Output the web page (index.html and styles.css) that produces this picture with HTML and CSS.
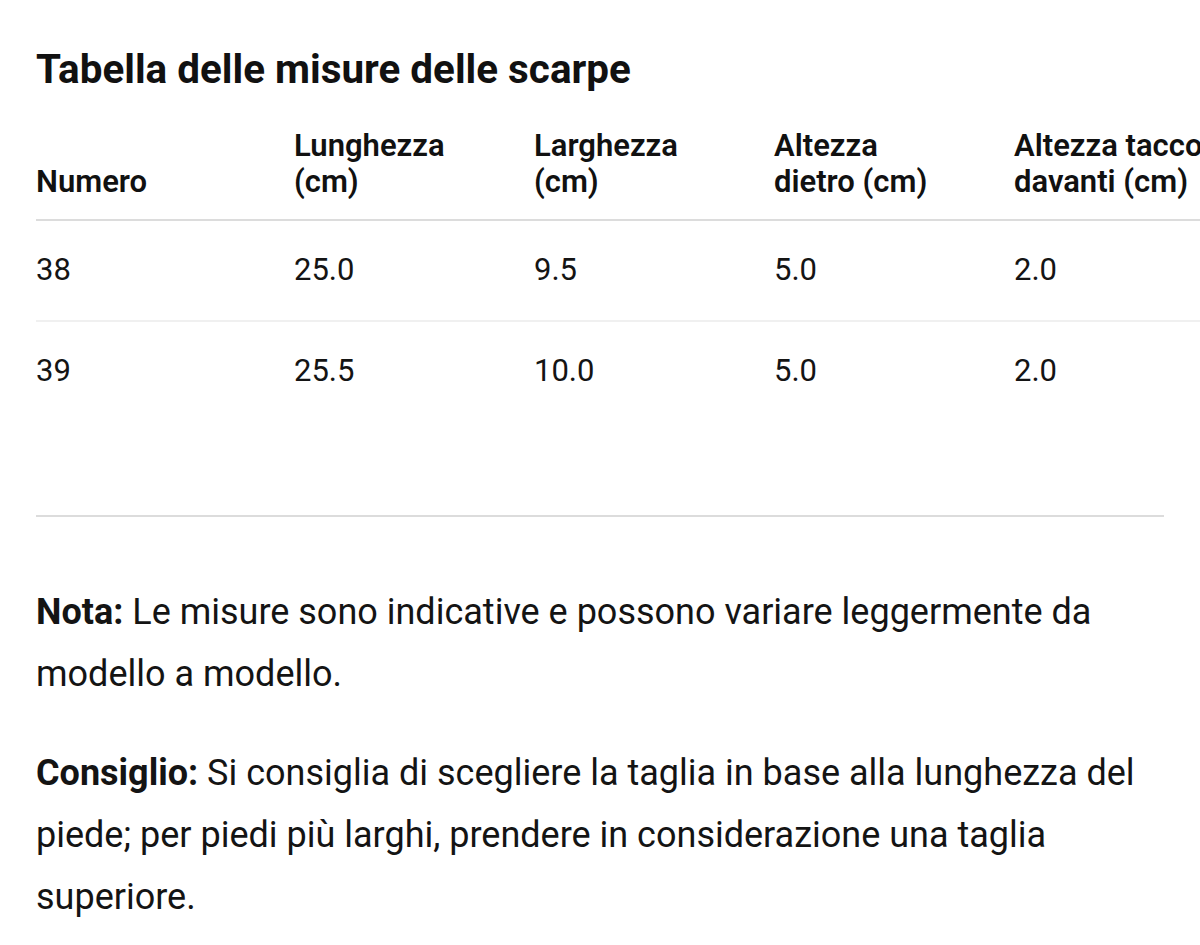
FILE: index.html
```html
<!DOCTYPE html>
<html lang="it">
<head>
<meta charset="utf-8">
<title>Tabella delle misure delle scarpe</title>
<link rel="stylesheet" href="styles.css">
</head>
<body>
<main class="page">
  <h1 class="title">Tabella delle misure delle scarpe</h1>
  <div class="table-wrap">
    <table class="sizes">
      <thead>
        <tr>
          <th class="col-first">Numero</th>
          <th>Lunghezza (cm)</th>
          <th>Larghezza (cm)</th>
          <th>Altezza dietro (cm)</th>
          <th class="col-last">Altezza tacco davanti (cm)</th>
        </tr>
      </thead>
      <tbody>
        <tr>
          <td>38</td>
          <td>25.0</td>
          <td>9.5</td>
          <td>5.0</td>
          <td>2.0</td>
        </tr>
        <tr>
          <td>39</td>
          <td>25.5</td>
          <td>10.0</td>
          <td>5.0</td>
          <td>2.0</td>
        </tr>
      </tbody>
    </table>
  </div>
  <p class="note"><strong>Nota:</strong> Le misure sono indicative e possono variare leggermente da modello a modello.</p>
  <p class="note"><strong>Consiglio:</strong> Si consiglia di scegliere la taglia in base alla lunghezza del piede; per piedi più larghi, prendere in considerazione una taglia superiore.</p>
</main>
</body>
</html>
```

FILE: styles.css
```css
html {
  overflow: hidden;
}
body {
  margin: 0;
  background: #ffffff;
  color: #141414;
  font-family: Roboto, "Liberation Sans", Arial, sans-serif;
}
.page {
  padding: 0 36px;
}
.title {
  margin: 48px 0 18px;
  font-size: 40.4px;
  line-height: 44px;
  font-weight: 700;
  color: #111111;
}
.table-wrap {
  padding-bottom: 94px;
  border-bottom: 2px solid #dcdcdc;
}
.sizes {
  border-collapse: collapse;
  table-layout: fixed;
  width: 1258px;
  font-size: 31px;
  line-height: 36px;
}
.sizes th {
  width: 190px;
  padding: 18px 50px 19px 0;
  text-align: left;
  vertical-align: bottom;
  font-weight: 600;
  color: #111111;
  border-bottom: 2px solid #dcdcdc;
}
.sizes th.col-first {
  width: 208px;
}
.sizes th.col-last {
  width: 240px;
}
.sizes td {
  padding: 31px 50px 32px 0;
  text-align: left;
  font-weight: 400;
}
.sizes tbody tr + tr td {
  border-top: 2px solid #f0f0f0;
}
.note {
  margin: 64px 0 0;
  font-size: 36px;
  line-height: 62px;
}
.note + .note {
  margin-top: 37px;
}
.note strong {
  font-weight: 700;
}
```
